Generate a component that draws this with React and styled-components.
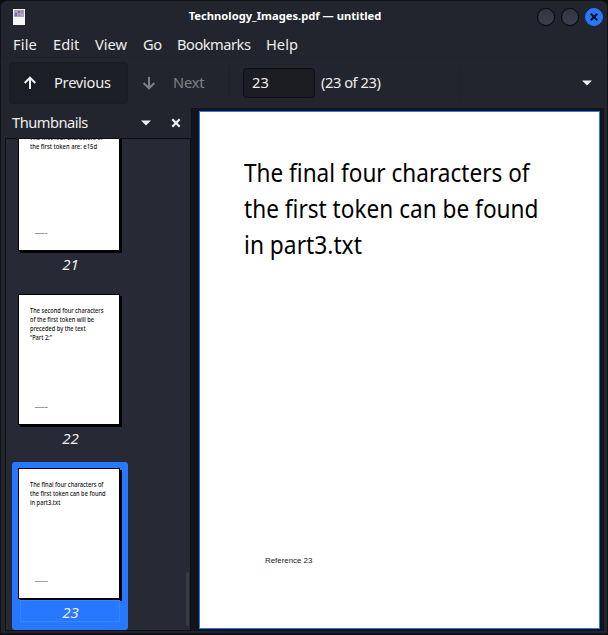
import React from "react";
import styled, { createGlobalStyle } from "styled-components";

const Global = createGlobalStyle`
  * { box-sizing: border-box; }
  body { margin: 0; background: #0d0e12; overflow: hidden; }
`;

const Window = styled.div`
  width: 608px;
  height: 635px;
  display: flex;
  flex-direction: column;
  background: #23252e;
  border: 1px solid #111217;
  border-bottom-width: 2px;
  border-radius: 7px 7px 0 0;
  overflow: hidden;
  color: #eeeeec;
  font: 14.67px/20px "Noto Sans", sans-serif;
  white-space: nowrap;
`;

const TitleBar = styled.header`
  height: 31px;
  flex: none;
  display: grid;
  grid-template-columns: 34px 1fr 74px;
  align-items: center;
  padding: 0 4px 0 12px;
`;

const Title = styled.h1`
  margin: 0;
  padding: 0 6px 2px 0;
  text-align: center;
  font-size: 11.2px;
  line-height: 20px;
  font-weight: 700;
  color: #fff;
`;

const Controls = styled.div`
  display: flex;
  gap: 6px;
  justify-content: flex-end;
`;

const RoundButton = styled.button`
  width: 18px;
  height: 18px;
  padding: 0;
  border-radius: 50%;
  border: 1px solid ${(p) => (p.$close ? "#2777ff" : "#07080a")};
  background: ${(p) => (p.$close ? "#2777ff" : "linear-gradient(#333642, #3b3e4b)")};
  display: grid;
  place-items: center;
`;

const MenuBar = styled.nav`
  height: 26px;
  flex: none;
  display: flex;
  align-items: center;
  padding: 0 0 1px 12px;
  border-bottom: 1px solid #20222a;
`;

const MenuItem = styled.span`
  width: ${(p) => p.$width}px;
  letter-spacing: ${(p) => p.$track}px;
`;

const Toolbar = styled.div`
  height: 50px;
  flex: none;
  display: flex;
  align-items: center;
  padding: 0 15px 0 8px;
`;

const ToolButton = styled.button`
  width: ${(p) => p.$width}px;
  height: 42px;
  display: flex;
  align-items: center;
  gap: 17px;
  padding: 0 0 0 13px;
  border: 1px solid ${(p) => (p.$active ? "#1a1c22" : "transparent")};
  border-radius: 4px;
  background: ${(p) => (p.$active ? "#1c1e25" : "transparent")};
  color: ${(p) => (p.$disabled ? "#7f8084" : "#eeeeec")};
  font: inherit;
`;

const ButtonText = styled.span`
  padding-bottom: 2px;
  letter-spacing: ${(p) => p.$track}px;
`;

const Separator = styled.div`
  width: 1px;
  height: 36px;
  background: #1f2128;
  margin-left: ${(p) => p.$left}px;
`;

const PageInput = styled.div`
  width: 72px;
  height: 30px;
  margin-left: 13px;
  padding: 3px 8px;
  border: 1px solid #0e0f13;
  border-radius: 4px;
  background: #1b1d23;
`;

const PageTotal = styled.span`
  margin-left: 6px;
  width: 60px;
  padding-bottom: 2px;
  letter-spacing: -0.45px;
`;

const Spacer = styled.div`
  flex: 1;
`;

const Content = styled.main`
  flex: 1;
  min-height: 0;
  display: flex;
  padding: 0 3px 2px 4px;
`;

const Sidebar = styled.aside`
  width: 186px;
  flex: none;
  display: flex;
  flex-direction: column;
`;

const SidebarHeader = styled.div`
  height: 30px;
  flex: none;
  display: flex;
  align-items: center;
  padding: 0 10px 0 7px;
`;

const List = styled.div`
  flex: 1;
  min-height: 0;
  position: relative;
  display: flex;
  flex-direction: column;
  justify-content: flex-end;
  gap: 6px;
  padding-left: 6px;
  border: 1px solid #0e0f13;
  background: #272a34;
  overflow: hidden;
`;

const ScrollThumb = styled.div`
  position: absolute;
  right: 1px;
  bottom: 4px;
  width: 3px;
  height: 54px;
  border-radius: 2px;
  background: #383b46;
`;

const Item = styled.div`
  width: 116px;
  height: 168px;
  flex: none;
  padding: 6px 6px 0;
  border-radius: 3px;
  background: ${(p) => (p.$selected ? "#2777ff" : "transparent")};
`;

const Sheet = styled.div`
  width: 102px;
  height: 131px;
  padding: ${(p) => p.$top}px 0 0 11px;
  display: flex;
  flex-direction: column;
  border: 1px solid #000;
  background: #fff;
  box-shadow: 2px 2px 0 #000;
  color: #111;
  font-size: 6.5px;
  font-weight: 500;
  line-height: 9px;
`;

const Line = styled.div`
  width: max-content;
  transform: scaleX(${(p) => p.$scale});
  transform-origin: left;
`;

const TinyReference = styled.div`
  margin: auto 0 15px 5px;
  font: 700 2px/4px "Liberation Sans", sans-serif;
  color: #111;
`;

const Label = styled.div`
  width: 100px;
  height: 22px;
  margin: 1px 0 0 2px;
  border: 1px solid ${(p) => (p.$selected ? "#3a83ff" : "transparent")};
  padding: 1px 0 0 1px;
  text-align: center;
  font-style: italic;
  font-size: 15px;
`;

const Viewer = styled.section`
  flex: 1;
  padding: 3px 4px 1px 8px;
  background: #121419;
`;

const Page = styled.article`
  height: 518px;
  display: flex;
  flex-direction: column;
  border: 1px solid #2777ff;
  background: #fff;
  color: #000;
  padding: 42px 0 0 44px;
  font-size: 25.5px;
  line-height: 36px;
`;

const Reference = styled.div`
  margin: auto 0 59px 21px;
  font: 7.9px/16px "Liberation Sans", sans-serif;
  color: #222;
`;

const HeaderTitle = styled.span`
  flex: 1;
  padding-bottom: 2px;
  letter-spacing: -0.5px;
`;

const ClosePanel = styled.svg`
  margin-left: 20px;
`;

const Arrow = ({ down }) => (
  <svg width="14" height="14" viewBox="0 0 14 14" fill="none" stroke="currentColor" strokeWidth="2">
    <path d={down ? "M7 1v11M1.7 7 7 12.3 12.3 7" : "M7 13V2M1.7 7 7 1.7 12.3 7"} />
  </svg>
);

const Caret = () => (
  <svg width="10" height="6" viewBox="0 0 10 6">
    <path d="M0 0.5h10L5 5.5Z" fill="#eeeeec" />
  </svg>
);

const DocumentIcon = () => (
  <svg width="12" height="16" viewBox="0 0 12 16">
    <path d="M0 0h12v16H0Z" fill="#f4f4f2" />
    <path d="M1 1h10v7H1Z" fill="#a99fc0" />
    <path d="M1 1h3v2H1ZM8 5h2v3H8Z" fill="#8cc0a0" />
    <path d="M5 2h2v2H5ZM2 4h2v3H2Z" fill="#766bc0" />
    <path d="M8 1h2v3H8ZM5 5h2v2H5Z" fill="#b77fae" />
  </svg>
);

const menus = [
  ["File", 40, 0.15],
  ["Edit", 42, 0],
  ["View", 48, 0],
  ["Go", 34, -0.4],
  ["Bookmarks", 89, -0.5],
  ["Help", 40, 0],
];

const thumbs = [
  {
    n: 21,
    top: 11.5,
    lines: [["The first four characters of", 0.88], ["the first token are: e15d", 0.9]],
  },
  {
    n: 22,
    top: 10.5,
    lines: [
      ["The second four characters", 0.87],
      ["of the first token will be", 0.87],
      ["preceded by the text", 0.87],
      ["“Part 2:”", 0.87],
    ],
  },
  {
    n: 23,
    top: 10.5,
    lines: [
      ["The final four characters of", 0.875],
      ["the first token can be found", 0.875],
      ["in part3.txt", 0.88],
    ],
  },
];

const pageLines = [
  ["The final four characters of", 0.885],
  ["the first token can be found", 0.887],
  ["in part3.txt", 0.893],
];

export default function App() {
  return (
    <>
      <Global />
      <Window>
        <TitleBar>
          <DocumentIcon />
          <Title>Technology_Images.pdf — untitled</Title>
          <Controls>
            <RoundButton aria-label="Minimize" />
            <RoundButton aria-label="Maximize" />
            <RoundButton $close aria-label="Close">
              <svg width="8" height="8" viewBox="0 0 8 8">
                <path d="M0.7 0.7 7.3 7.3M7.3 0.7 0.7 7.3" stroke="#0b1020" strokeWidth="2.1" />
              </svg>
            </RoundButton>
          </Controls>
        </TitleBar>
        <MenuBar>
          {menus.map(([name, width, track]) => (
            <MenuItem key={name} $width={width} $track={track}>{name}</MenuItem>
          ))}
        </MenuBar>
        <Toolbar>
          <ToolButton $width={119} $active>
            <Arrow />
            <ButtonText $track={-0.25}>Previous</ButtonText>
          </ToolButton>
          <ToolButton $width={97} $disabled>
            <Arrow down />
            <ButtonText $track={-0.2}>Next</ButtonText>
          </ToolButton>
          <Separator $left={4} />
          <PageInput>23</PageInput>
          <PageTotal>(23 of 23)</PageTotal>
          <Separator $left={79} />
          <Spacer />
          <Caret />
        </Toolbar>
        <Content>
          <Sidebar>
            <SidebarHeader>
              <HeaderTitle>Thumbnails</HeaderTitle>
              <Caret />
              <ClosePanel width="10" height="10" viewBox="0 0 10 10">
                <path d="M1.3 1.3 8.7 8.7M8.7 1.3 1.3 8.7" stroke="#eeeeec" strokeWidth="2.2" />
              </ClosePanel>
            </SidebarHeader>
            <List>
              {thumbs.map((t) => (
                <Item key={t.n} $selected={t.n === 23}>
                  <Sheet $top={t.top}>
                    {t.lines.map(([text, scale]) => (
                      <Line key={text} $scale={scale}>{text}</Line>
                    ))}
                    <TinyReference>Reference {t.n}</TinyReference>
                  </Sheet>
                  <Label $selected={t.n === 23}>{t.n}</Label>
                </Item>
              ))}
              <ScrollThumb />
            </List>
          </Sidebar>
          <Viewer>
            <Page>
              {pageLines.map(([text, scale]) => (
                <Line key={text} $scale={scale}>{text}</Line>
              ))}
              <Reference>Reference 23</Reference>
            </Page>
          </Viewer>
        </Content>
      </Window>
    </>
  );
}
